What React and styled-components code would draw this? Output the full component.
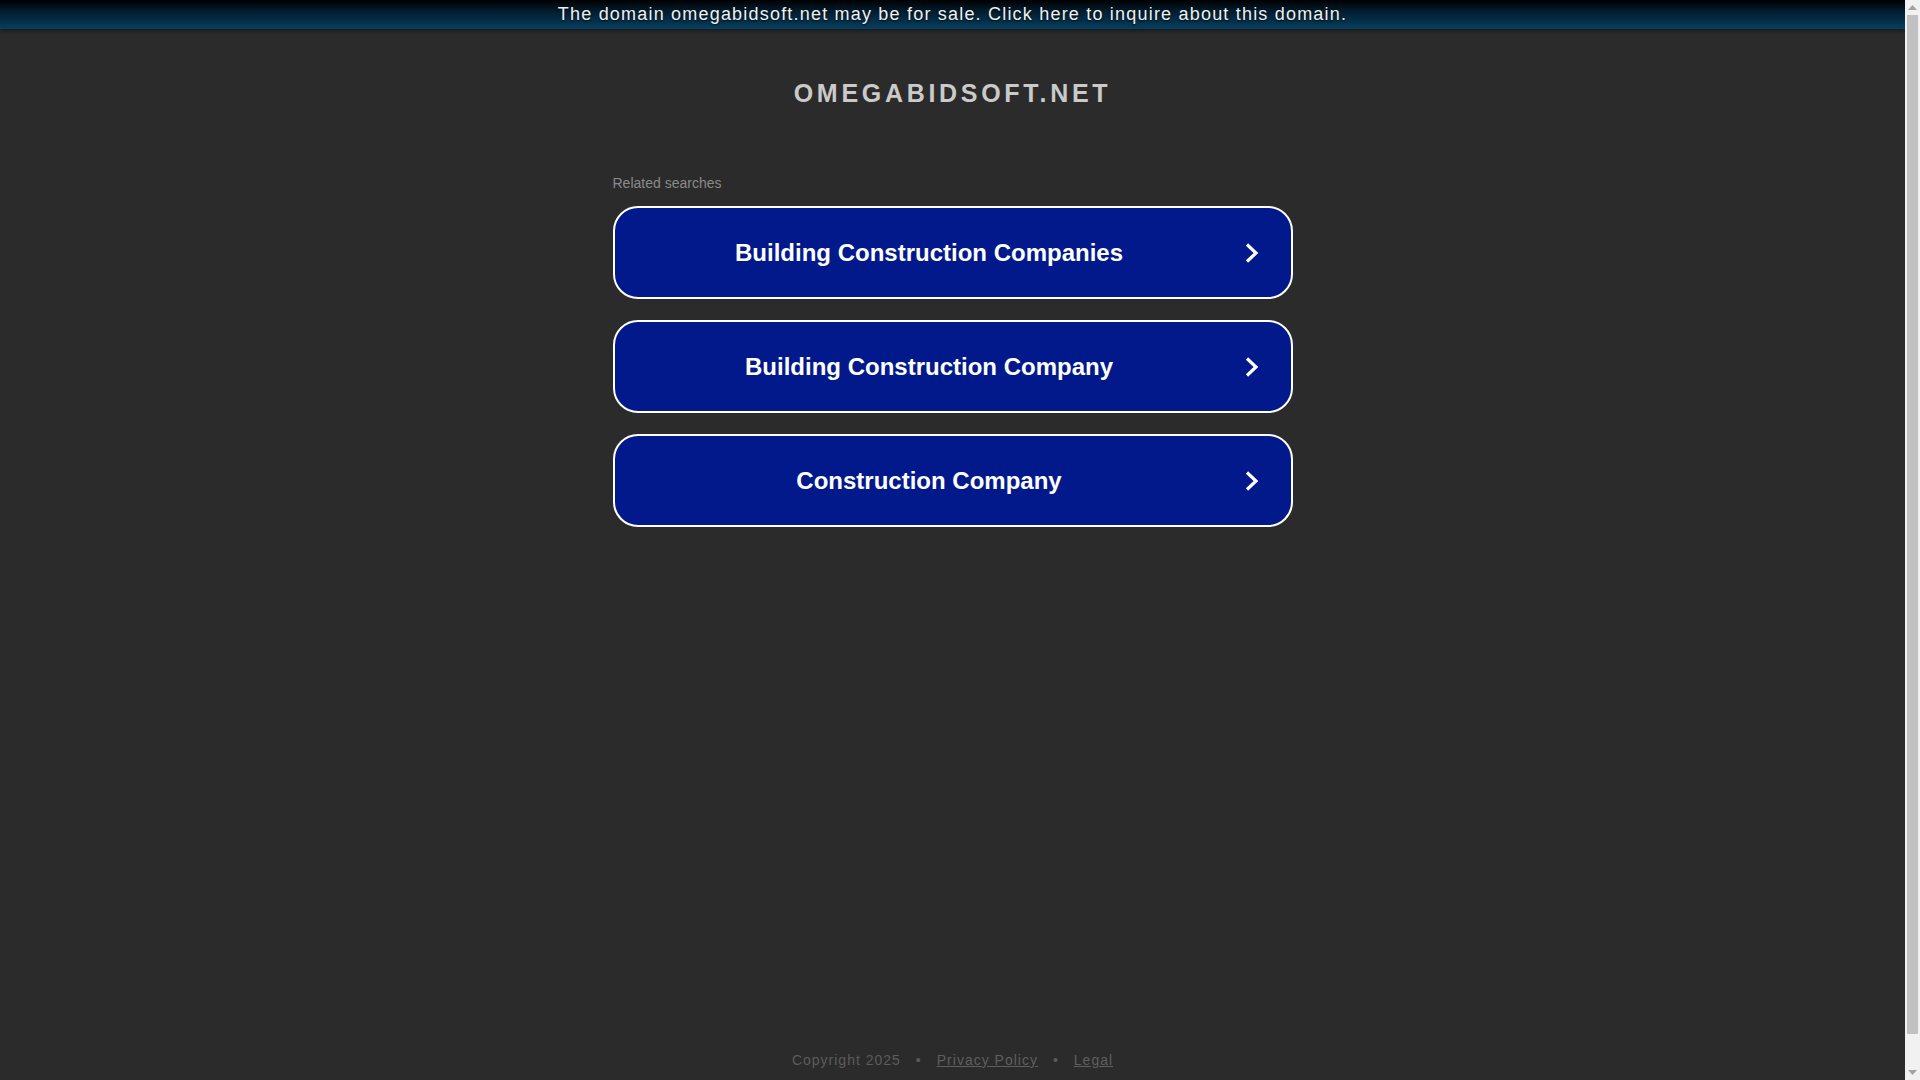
import React from 'react';
import styled, { createGlobalStyle } from 'styled-components';

const GlobalStyle = createGlobalStyle`
  html,
  body {
    margin: 0;
    padding: 0;
    background: #2b2b2b;
    font-family: Arial, "Liberation Sans", Helvetica, sans-serif;
  }
`;

const Viewport = styled.div`
  display: flex;
  height: 100vh;
  overflow: hidden;
`;

const Main = styled.div`
  flex: 1;
  min-width: 0;
  overflow: hidden;
`;

const Page = styled.div`
  min-height: calc(100vh + 34px);
  display: flex;
  flex-direction: column;
`;

const SaleBanner = styled.a`
  display: block;
  height: 29px;
  line-height: 28px;
  text-align: center;
  font-size: 18px;
  letter-spacing: 1.2px;
  color: #f0f0f0;
  text-decoration: none;
  text-shadow: 0 1px 2px rgba(0, 0, 0, 0.8);
  background: linear-gradient(to bottom, #000 0%, #021a2a 35%, #063f60 100%);
  box-shadow: 0 2px 4px rgba(0, 0, 0, 0.45);
`;

const Title = styled.h1`
  margin: 0;
  padding-top: 49px;
  text-align: center;
  font-size: 25px;
  line-height: 30px;
  font-weight: bold;
  letter-spacing: 3.7px;
  color: #cacaca;
`;

const Searches = styled.div`
  width: 680px;
  margin: 67px auto 0;
`;

const SearchesLabel = styled.div`
  font-size: 14px;
  line-height: 16px;
  color: #8a8a8a;
  margin-bottom: 15px;
`;

const SearchList = styled.div`
  display: flex;
  flex-direction: column;
  gap: 21px;
`;

const SearchButton = styled.a`
  box-sizing: border-box;
  display: flex;
  align-items: center;
  gap: 22px;
  height: 93px;
  padding: 0 31px 0 22px;
  border: 2px solid #fff;
  border-radius: 25px;
  background: #01198a;
  color: #fff;
  text-decoration: none;
`;

const SearchText = styled.span`
  flex: 1;
  text-align: center;
  font-size: 24px;
  font-weight: bold;
`;

const Footer = styled.footer`
  margin-top: auto;
  padding-bottom: 46px;
  text-align: center;
  font-size: 14px;
  line-height: 16px;
  letter-spacing: 1px;
  color: #5c5c5c;
`;

const FooterLink = styled.a`
  color: #5f5f5f;
  text-decoration: underline;
`;

const Dot = styled.span`
  margin: 0 15px;
`;

const ScrollBar = styled.div`
  flex: 0 0 15px;
  display: flex;
  flex-direction: column;
  background: #f1f1f1;
`;

const ScrollArrow = styled.div`
  flex: 0 0 15px;
  display: flex;
  align-items: center;
  justify-content: center;
`;

const ScrollTrack = styled.div`
  flex: 1;
  padding: 0 2px;
`;

const ScrollThumb = styled.div`
  height: 97%;
  background: #c1c1c1;
`;

const Chevron = () => (
  <svg width="16" height="24" viewBox="0 0 16 24">
    <polyline points="3,3.5 12,12 3,20.5" fill="none" stroke="#fff" strokeWidth="3.2" strokeLinecap="butt" strokeLinejoin="miter" />
  </svg>
);

const Triangle = ({ down }) => (
  <svg width="9" height="5" viewBox="0 0 9 5">
    <polygon points={down ? '0,0 9,0 4.5,5' : '0,5 9,5 4.5,0'} fill="#a3a3a3" />
  </svg>
);

const searches = ['Building Construction Companies', 'Building Construction Company', 'Construction Company'];

const App = () => (
  <Viewport>
    <GlobalStyle />
    <Main>
      <Page>
        <SaleBanner href="#">The domain omegabidsoft.net may be for sale. Click here to inquire about this domain.</SaleBanner>
        <Title>OMEGABIDSOFT.NET</Title>
        <Searches>
          <SearchesLabel>Related searches</SearchesLabel>
          <SearchList>
            {searches.map(s => (
              <SearchButton href="#" key={s}>
                <SearchText>{s}</SearchText>
                <Chevron />
              </SearchButton>
            ))}
          </SearchList>
        </Searches>
        <Footer>
          Copyright 2025
          <Dot>•</Dot>
          <FooterLink href="#">Privacy Policy</FooterLink>
          <Dot>•</Dot>
          <FooterLink href="#">Legal</FooterLink>
        </Footer>
      </Page>
    </Main>
    <ScrollBar>
      <ScrollArrow>
        <Triangle />
      </ScrollArrow>
      <ScrollTrack>
        <ScrollThumb />
      </ScrollTrack>
      <ScrollArrow>
        <Triangle down />
      </ScrollArrow>
    </ScrollBar>
  </Viewport>
);

export default App;
